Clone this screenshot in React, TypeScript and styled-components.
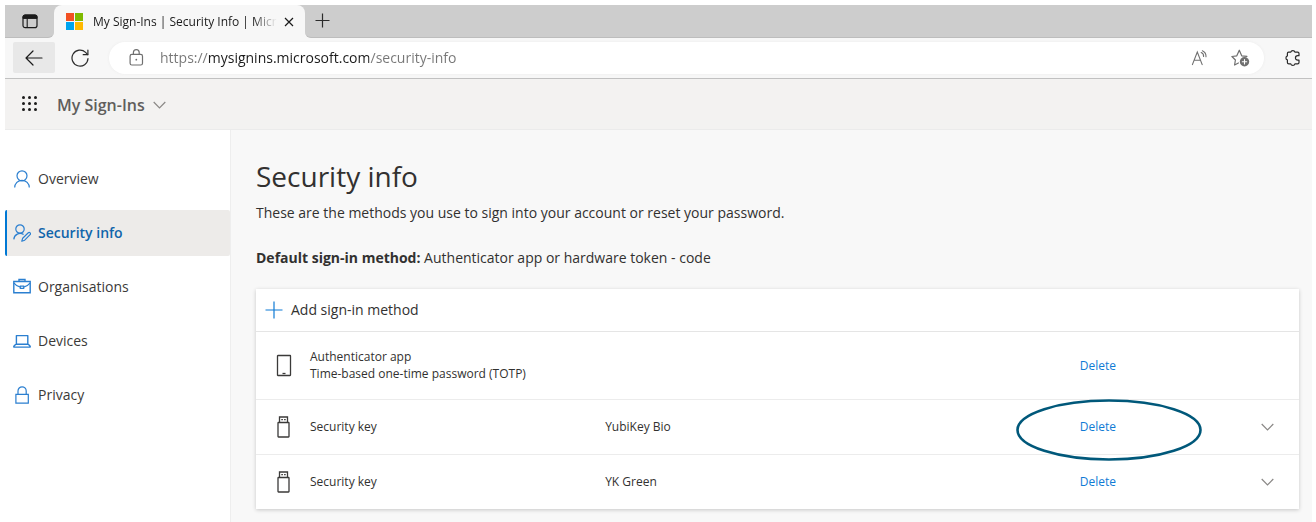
import React from "react";
import styled, { createGlobalStyle, css } from "styled-components";

const GlobalStyle = createGlobalStyle`
  *, *::before, *::after { box-sizing: border-box; }
  body {
    margin: 0;
    background: #ffffff;
    color: #323130;
    font-family: "Segoe UI", "Open Sans", "Noto Sans", sans-serif;
    font-size: 14px;
    line-height: 20px;
  }
  button {
    font: inherit;
    color: inherit;
    background: none;
    border: 0;
    padding: 0;
    cursor: pointer;
  }
  svg { display: block; flex: none; }
`;

const Window = styled.div`
  display: flex;
  flex-direction: column;
  min-height: 100vh;
  padding: 5px 4px 0 5px;
`;

/* Browser chrome */

const TabStrip = styled.div`
  display: flex;
  height: 33px;
  background: #f7f7f7;
`;

const StripStart = styled.div`
  display: flex;
  align-items: center;
  justify-content: center;
  width: 49px;
  background: #cdcdcd;
  border-bottom: 1px solid #bdbdbd;
  border-bottom-right-radius: 6px;
`;

const StripEnd = styled.div`
  display: flex;
  align-items: center;
  flex: 1;
  padding-left: 10px;
  background: #cdcdcd;
  border-bottom: 1px solid #bdbdbd;
  border-bottom-left-radius: 6px;
`;

const TabSlot = styled.div`
  width: 251px;
  background: linear-gradient(#cdcdcd 50%, #f7f7f7 50%);
`;

const Tab = styled.div`
  display: flex;
  align-items: center;
  height: 100%;
  padding: 0 11px 0 12px;
  background: #f7f7f7;
  border-radius: 8px 8px 0 0;
`;

const TabTitle = styled.span`
  flex: 1;
  min-width: 0;
  margin: 0 7px 0 10px;
  overflow: hidden;
  white-space: nowrap;
  font-size: 12px;
  color: #1b1b1b;
  mask-image: linear-gradient(to left, transparent, #000 24px);
`;

const Toolbar = styled.div`
  display: flex;
  align-items: center;
  height: 41px;
  padding: 0 8px 1px 8px;
  background: #f7f7f7;
  border-bottom: 1px solid #c1c1c1;
`;

const ToolButton = styled.button<{ $active?: boolean }>`
  display: flex;
  align-items: center;
  justify-content: center;
  width: ${(p) => (p.$active ? 42 : 24)}px;
  height: 31px;
  border-radius: 2px;
  background: ${(p) => (p.$active ? "#e8e8e8" : "transparent")};
`;

const NavigationButtons = styled.div`
  display: flex;
  gap: 13px;
`;

const AddressBar = styled.form`
  display: flex;
  align-items: center;
  flex: 1;
  gap: 16px;
  height: 32px;
  margin: 0 16px 0 17px;
  padding: 0 12px 0 20px;
  background: #ffffff;
  border-radius: 16px;
  box-shadow: 0 0 3px #ececec;
`;

/* The scheme and the path are greyed, the host name stays dark. */
const AddressInput = styled.input`
  flex: 1;
  min-width: 0;
  height: 24px;
  padding: 0;
  border: 0;
  outline: 0;
  font: inherit;
  color: transparent;
  caret-color: #1b1b1b;
  background-image: linear-gradient(to right, #767676 48px, #1b1b1b 48px, #1b1b1b 209px, #767676 209px);
  background-clip: text;
`;

/* Application header */

const AppHeader = styled.header`
  display: flex;
  align-items: center;
  height: 51px;
  gap: 19px;
  padding: 1px 16px 0;
  background: #f3f2f1;
  border-bottom: 1px solid #ebebeb;
`;

const AppName = styled.button`
  display: flex;
  align-items: center;
  gap: 8px;
  font-size: 16px;
  font-weight: 600;
  color: #605e5c;
`;

const Body = styled.div`
  display: flex;
  flex: 1;
`;

/* Side navigation */

const SideNav = styled.nav`
  display: flex;
  flex-direction: column;
  gap: 8px;
  width: 226px;
  padding-top: 26px;
  background: #ffffff;
  border-right: 1px solid #eeeeee;
`;

const NavLink = styled.a<{ $current?: boolean }>`
  display: flex;
  align-items: center;
  gap: 7px;
  height: 46px;
  padding-left: 6px;
  border-left: 2px solid transparent;
  border-radius: 2px;
  color: #3b3a39;
  text-decoration: none;
  ${(p) =>
    p.$current &&
    css`
      background: #edebe9;
      border-left-color: #0078d4;
      color: #1065ab;
      font-weight: 600;
    `}
`;

/* Main content */

const Main = styled.main`
  flex: 1;
  min-width: 0;
  padding: 24px 13px 12px 25px;
  background: #f8f8f8;
`;

const Title = styled.h1`
  margin: 0;
  font-size: 28px;
  line-height: 44px;
  font-weight: 400;
`;

const Paragraph = styled.p`
  margin: 5px 0 25px;
`;

const Card = styled.section`
  margin-top: -4px;
  background: #ffffff;
  box-shadow: 0 1px 4px rgba(0, 0, 0, 0.2);
`;

const CommandBar = styled.div`
  display: flex;
  align-items: center;
  height: 43px;
  padding-left: 9px;
  border-bottom: 1px solid #e5e5e5;
`;

const AddButton = styled.button`
  display: flex;
  align-items: center;
  gap: 8px;
`;

const Methods = styled.table`
  width: 100%;
  table-layout: fixed;
  border-collapse: collapse;
  font-size: 12px;
  line-height: 17px;
`;

const MethodRow = styled.tr<{ $tall?: boolean }>`
  height: ${(p) => (p.$tall ? 67 : 55)}px;
  & + & {
    border-top: 1px solid #ececec;
  }
`;

const Column = styled.col<{ $width?: string }>`
  width: ${(p) => p.$width ?? "auto"};
`;

const Cell = styled.td`
  padding: 0;
  text-align: left;
`;

const IconCell = styled(Cell)`
  padding-left: 20px;
`;

const DeleteButton = styled.button`
  position: relative;
  color: #0f7bd5;
`;

const Highlight = styled.svg`
  position: absolute;
  top: -20px;
  left: -64px;
  pointer-events: none;
  overflow: visible;
`;

/* Icons */

const WorkspacesIcon = () => (
  <svg width="16" height="15" viewBox="0 0 16 15" fill="none" stroke="#1b1b1b">
    <rect x="1" y="1" width="14" height="12.6" rx="2.2" strokeWidth="1.2" />
    <path d="M1 4.4V3a2 2 0 0 1 2-2h10a2 2 0 0 1 2 2v1.4z" fill="#1b1b1b" />
    <path d="M5.2 4.5v9" strokeWidth="1.1" />
  </svg>
);

const MicrosoftLogo = () => (
  <svg width="17" height="17" viewBox="0 0 17 17">
    <path fill="#f25022" d="M0 0h8v8H0z" />
    <path fill="#7fba00" d="M9 0h8v8H9z" />
    <path fill="#00a4ef" d="M0 9h8v8H0z" />
    <path fill="#ffb900" d="M9 9h8v8H9z" />
  </svg>
);

const CloseIcon = () => (
  <svg width="10" height="10" viewBox="0 0 10 10" fill="none" stroke="#1b1b1b" strokeWidth="1.2">
    <path d="M1 1l8 8M9 1L1 9" />
  </svg>
);

const NewTabIcon = () => (
  <svg width="16" height="16" viewBox="0 0 16 16" fill="none" stroke="#2b2b2b" strokeWidth="1.2">
    <path d="M7.500 .5v14M.5 7.500h14" />
  </svg>
);

const BackIcon = () => (
  <svg width="18" height="16" viewBox="0 0 18 16" fill="none" stroke="#1b1b1b" strokeWidth="1.2" strokeLinecap="round" strokeLinejoin="round">
    <path d="M17 8H1M8 1L1 8l7 7" />
  </svg>
);

const ReloadIcon = () => (
  <svg width="18" height="18" viewBox="0 0 18 18" fill="none" stroke="#2b2b2b" strokeWidth="1.2" strokeLinecap="round" strokeLinejoin="round">
    <path d="M17 9.500A8 8 0 1 1 14.600 3.400L16.700 5.600" />
    <path d="M16.900 1v4.700h-4.700" />
  </svg>
);

const SiteLockIcon = () => (
  <svg width="15" height="17" viewBox="0 0 15 17" fill="none" stroke="#6f6f6f" strokeWidth="1.2">
    <rect x="1.1" y="5.4" width="12.4" height="10.6" rx="1.8" />
    <path d="M4.4 5.4V3.6a2.9 2.9 0 0 1 5.8 0v1.8" />
    <circle cx="7.3" cy="10.7" r=".9" fill="#6f6f6f" stroke="none" />
  </svg>
);

const ReadAloudIcon = () => (
  <svg width="18" height="16" viewBox="0 0 18 16" fill="none" stroke="#6f6f6f" strokeWidth="1.1" strokeLinecap="round">
    <path d="M1.4 14.6L6.3 2l4.9 12.6M3.1 10.3h6.4" />
    <path d="M10.2 2.5a4 4 0 0 1 2.4 4M11.4.8a6.2 6.2 0 0 1 3.6 6" />
  </svg>
);

const FavouriteIcon = () => (
  <svg width="19" height="18" viewBox="0 0 19 18" fill="none" stroke="#6f6f6f" strokeWidth="1.2" strokeLinejoin="round" strokeLinecap="round">
    <path d="M7.4 14L3.6 16l.8-5L.9 7.500l4.900-.7L8.300 1.200l2.400 5.600 5.200.6" />
    <circle cx="13.500" cy="12.800" r="4.700" fill="#6f6f6f" stroke="none" />
    <path d="M13.500 10.600v4.400M11.300 12.800h4.400" stroke="#ffffff" strokeWidth="1.100" />
  </svg>
);

const ExtensionsIcon = () => (
  <svg width="17" height="18" viewBox="0 0 17 18" fill="none" stroke="#2b2b2b" strokeWidth="1.2" strokeLinejoin="round">
    <path d="M4.600 3.200h2.200a2.100 2.100 0 0 1 4.100 0h2.700a1.400 1.400 0 0 1 1.400 1.400v2.100h-1.300a2.100 2.100 0 0 0 0 4.500h1.300v2.200a1.400 1.400 0 0 1-1.400 1.400h-2.700a2.100 2.100 0 0 1-4.100 0H4.800a1.400 1.400 0 0 1-1.400-1.400v-2.500a2.100 2.100 0 0 1 0-4V4.600a1.400 1.400 0 0 1 1.200-1.400z" />
  </svg>
);

const LauncherIcon = () => (
  <svg width="17" height="17" viewBox="0 0 17 17" fill="#1b1b1b">
    {[1, 7, 13].map((y) => [2, 8, 14].map((x) => <circle key={`${x}-${y}`} cx={x + 0.5} cy={y + 0.5} r="1.5" />))}
  </svg>
);

const ChevronDownIcon = () => (
  <svg width="13" height="8" viewBox="0 0 13 8" fill="none" stroke="#8a8886" strokeWidth="1.2">
    <path d="M.7 1l5.800 5.800L12.300 1" />
  </svg>
);

const navIcon = { width: 18, height: 18, viewBox: "0 0 18 18", fill: "none", stroke: "#2b7fd0", strokeWidth: 1.2 };

const PersonIcon = () => (
  <svg {...navIcon}>
    <circle cx="9" cy="5.800" r="5" />
    <path d="M1.700 17.600a7.300 7.300 0 0 1 14.600 0" />
  </svg>
);

const PersonEditIcon = () => (
  <svg {...navIcon}>
    <circle cx="7" cy="5" r="4.200" />
    <path d="M.8 15.400a6.300 6.300 0 0 1 9.800-4.900" />
    <path d="M8.800 17.200l.9-3 5.600-5.400a1.200 1.200 0 0 1 1.800 1.800l-5.400 5.600z" strokeLinejoin="round" />
  </svg>
);

const BriefcaseIcon = () => (
  <svg {...navIcon}>
    <path d="M.8 3.500h16.400v11.300H.8zM6 3.300V1.500h6v1.800" strokeWidth="1.400" />
    <path d="M1 5.200c2 2.500 4.300 3.700 6.300 3.900M17 5.200c-2 2.500-4.300 3.700-6.300 3.900" />
    <path d="M7.300 8.200h3.400v2.200H7.300z" />
  </svg>
);

const LaptopIcon = () => (
  <svg {...navIcon}>
    <path d="M3.400 3.600h11.400v8.600H3.400zM2.800 12.300L.8 14.300v.8h16.400v-.8l-1.900-2" strokeWidth="1.400" strokeLinejoin="round" />
  </svg>
);

const PadlockIcon = () => (
  <svg {...navIcon}>
    <path d="M2.900 8.400h12.400v8.800H2.900zM5 8.400V4.900a4.100 4.100 0 0 1 8.200 0v3.500" />
  </svg>
);

const PlusIcon = () => (
  <svg width="18" height="18" viewBox="0 0 18 18" fill="none" stroke="#0f7bd5" strokeWidth="1.2">
    <path d="M9 .5v17M.5 9h17" />
  </svg>
);

const PhoneIcon = () => (
  <svg width="16" height="23" viewBox="0 0 16 23" fill="none" stroke="#3b3a39" strokeWidth="1.300">
    <rect x="1.500" y="1.500" width="13" height="20" rx=".4" />
    <path d="M6.500 19.500h3" />
  </svg>
);

const UsbKeyIcon = () => (
  <svg width="16" height="22" viewBox="0 0 16 22" fill="none" stroke="#3b3a39" strokeWidth="1.300">
    <rect x="2" y="6.500" width="11" height="14.500" rx=".5" />
    <path d="M3.500 6.500V1h8v5.500" />
    <path d="M5.300 3.700h1.600M8.100 3.700h1.600" />
  </svg>
);

const navigation = [
  { label: "Overview", icon: PersonIcon },
  { label: "Security info", icon: PersonEditIcon, current: true },
  { label: "Organisations", icon: BriefcaseIcon },
  { label: "Devices", icon: LaptopIcon },
  { label: "Privacy", icon: PadlockIcon },
];

const methods = [
  { title: "Authenticator app", detail: "Time-based one-time password (TOTP)", icon: PhoneIcon },
  { title: "Security key", name: "YubiKey Bio", icon: UsbKeyIcon, expandable: true, highlighted: true },
  { title: "Security key", name: "YK Green", icon: UsbKeyIcon, expandable: true },
];

export default function App() {
  return (
    <Window>
      <GlobalStyle />
      <TabStrip>
        <StripStart>
          <button aria-label="Tab actions">
            <WorkspacesIcon />
          </button>
        </StripStart>
        <TabSlot>
          <Tab>
            <MicrosoftLogo />
            <TabTitle>My Sign-Ins | Security Info | Micro</TabTitle>
            <button aria-label="Close tab">
              <CloseIcon />
            </button>
          </Tab>
        </TabSlot>
        <StripEnd>
          <button aria-label="New tab">
            <NewTabIcon />
          </button>
        </StripEnd>
      </TabStrip>
      <Toolbar>
        <NavigationButtons>
          <ToolButton $active aria-label="Back">
            <BackIcon />
          </ToolButton>
          <ToolButton aria-label="Refresh">
            <ReloadIcon />
          </ToolButton>
        </NavigationButtons>
        <AddressBar onSubmit={(e) => e.preventDefault()}>
          <SiteLockIcon />
          <AddressInput aria-label="Address" defaultValue="https://mysignins.microsoft.com/security-info" spellCheck={false} />
          <ToolButton type="button" aria-label="Read aloud">
            <ReadAloudIcon />
          </ToolButton>
          <ToolButton type="button" aria-label="Add to favourites">
            <FavouriteIcon />
          </ToolButton>
        </AddressBar>
        <ToolButton aria-label="Extensions">
          <ExtensionsIcon />
        </ToolButton>
      </Toolbar>
      <AppHeader>
        <button aria-label="App launcher">
          <LauncherIcon />
        </button>
        <AppName>
          My Sign-Ins
          <ChevronDownIcon />
        </AppName>
      </AppHeader>
      <Body>
        <SideNav aria-label="Account">
          {navigation.map(({ label, icon: Icon, current }) => (
            <NavLink key={label} href="#" $current={current} aria-current={current ? "page" : undefined}>
              <Icon />
              {label}
            </NavLink>
          ))}
        </SideNav>
        <Main>
          <Title>Security info</Title>
          <Paragraph>These are the methods you use to sign into your account or reset your password.</Paragraph>
          <Paragraph>
            <strong>Default sign-in method:</strong> Authenticator app or hardware token - code
          </Paragraph>
          <Card>
            <CommandBar>
              <AddButton>
                <PlusIcon />
                Add sign-in method
              </AddButton>
            </CommandBar>
            <Methods aria-label="Sign-in methods">
              <colgroup>
                <Column $width="54px" />
                <Column $width="28.3%" />
                <Column $width="45.5%" />
                <Column />
                <Column $width="38px" />
              </colgroup>
              <tbody>
                {methods.map(({ title, detail, name, icon: Icon, expandable, highlighted }, index) => (
                  <MethodRow key={index} $tall={Boolean(detail)}>
                    <IconCell>
                      <Icon />
                    </IconCell>
                    <Cell>
                      {title}
                      {detail && <div>{detail}</div>}
                    </Cell>
                    <Cell>{name}</Cell>
                    <Cell>
                      <DeleteButton>
                        Delete
                        {highlighted && (
                          <Highlight width="186" height="64" viewBox="0 0 186 64" fill="none" stroke="#00587a" strokeWidth="2.600" aria-hidden="true">
                            <ellipse cx="93" cy="32" rx="91.500" ry="29.500" />
                          </Highlight>
                        )}
                      </DeleteButton>
                    </Cell>
                    <Cell>
                      {expandable && (
                        <button aria-label={`Show details for ${name}`}>
                          <ChevronDownIcon />
                        </button>
                      )}
                    </Cell>
                  </MethodRow>
                ))}
              </tbody>
            </Methods>
          </Card>
        </Main>
      </Body>
    </Window>
  );
}
